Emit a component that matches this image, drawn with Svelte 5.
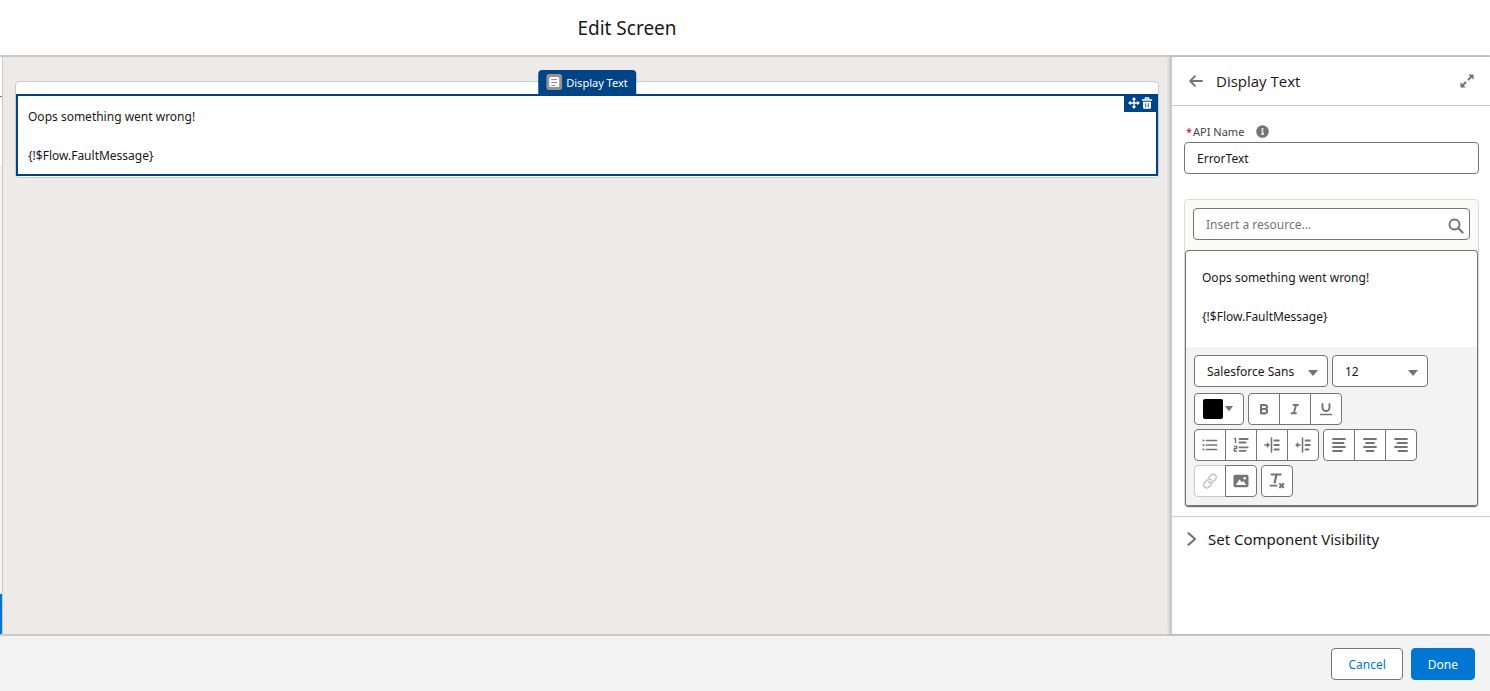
<script lang="ts">
  let apiName = $state('ErrorText');
  let resource = $state('');
  const lines = ['Oops something went wrong!', '{!$Flow.FaultMessage}'];
</script>

<div class="modal">
  <header class="modal-header"><h1>Edit Screen</h1></header>

  <main class="workspace">
    <div class="toolbox" aria-hidden="true">
      <span class="toolbox-tabs"></span>
      <span class="toolbox-list"></span>
      <span class="toolbox-active"></span>
    </div>

    <section class="canvas">
      <div class="card">
        <div class="selected">
          <div class="tag">
            <svg width="16" height="16" viewBox="0 0 16 16"><rect width="16" height="16" rx="3" fill="#969492" /><rect x="3" y="3" width="10" height="10" rx="1.5" fill="#fff" /><path d="M5 5.500h6M5 8.500h6M5 11.500h4" stroke="#969492" stroke-width="1" /></svg>
            <span>Display Text</span>
          </div>
          <div class="tools">
            <button aria-label="Move">
              <svg width="12" height="12" viewBox="0 0 12 12"><path d="M6 2v8M2 6h8" stroke="#fff" stroke-width="1.4" /><path d="M6 0l2.300 2.800H3.700zM6 12l2.300-2.800H3.700zM0 6l2.800-2.300v4.600zM12 6L9.200 3.700v4.600z" fill="#fff" /></svg>
            </button>
            <button aria-label="Delete">
              <svg width="12" height="12" viewBox="0 0 12 12"><path d="M1.500 3h9" stroke="#fff" stroke-width="1.600" stroke-linecap="round" /><path d="M4.300 2.600V1h3.400v1.600" fill="none" stroke="#fff" stroke-width="1.300" stroke-linejoin="round" /><path d="M2 4.800h8v5.800q0 1.200-1.200 1.200H3.200Q2 11.800 2 10.600z" fill="#fff" /><path d="M4.700 6.300v4M7.300 6.300v4" stroke="#014486" stroke-width=".9" /></svg>
            </button>
          </div>
          {#each lines as line}<p>{line}</p>{/each}
        </div>
      </div>
    </section>

    <aside class="panel">
      <div class="panel-header">
        <button class="plain" aria-label="Back">
          <svg width="14" height="12" viewBox="0 0 14 12"><path d="M1.200 6H13M6 1.200L1.200 6 6 10.800" fill="none" stroke="#747474" stroke-width="1.900" stroke-linecap="round" stroke-linejoin="round" /></svg>
        </button>
        <h2>Display Text</h2>
        <button class="plain" aria-label="Expand">
          <svg width="14" height="14" viewBox="0 0 14 14"><path d="M8.500 5.500l3-3M5.500 8.500l-3 3" stroke="#747474" stroke-width="2" stroke-linecap="round" /><path d="M8.300.4h4.700q.6 0 .6.600v4.700zM5.700 13.600H1q-.6 0-.6-.6V8.300z" fill="#747474" /></svg>
        </button>
      </div>

      <div class="panel-body">
        <div class="label-row">
          <label for="api-name"><abbr>*</abbr>API Name</label>
          <button class="plain" aria-label="Help">
            <svg width="13" height="13" viewBox="0 0 13 13"><circle cx="6.500" cy="6.500" r="6.300" fill="#747474" /><circle cx="6.500" cy="3.900" r="1" fill="#fff" /><path d="M5.300 6h1.400v3M5 9.200h3" fill="none" stroke="#fff" stroke-width="1.200" /></svg>
          </button>
        </div>
        <input id="api-name" class="field" type="text" bind:value={apiName} />

        <div class="rich">
          <div class="resource">
            <input class="field" type="text" aria-label="Insert a resource" placeholder="Insert a resource..." bind:value={resource} />
            <svg class="search" width="16" height="16" viewBox="0 0 16 16"><circle cx="6.500" cy="6.500" r="5" fill="none" stroke="#747474" stroke-width="1.900" /><path d="M10.300 10.300l4.300 4.300" stroke="#747474" stroke-width="2.100" stroke-linecap="round" /></svg>
          </div>
          <div class="editor">
            <div class="content" contenteditable="true" role="textbox" tabindex="0" aria-label="Text">
              {#each lines as line}<p>{line}</p>{/each}
            </div>
            <div class="toolbar">
              <div class="row selects">
                <div class="select font"><select aria-label="Font"><option>Salesforce Sans</option></select></div>
                <div class="select size"><select aria-label="Size"><option>12</option></select></div>
              </div>
              <div class="row">
                <button class="color" aria-label="Text colour"><span class="swatch"></span><svg width="8" height="6" viewBox="0 0 8 6"><path d="M.6 0h6.800q.7 0 .3.600L4.500 4.700q-.5.600-1 0L.3.600Q-.1 0 .6 0z" fill="#747474" /></svg></button>
                <div class="group">
                  <button aria-label="Bold"><svg viewBox="0 0 16 16"><path d="M5 4h3.900a1.950 1.950 0 0 1 0 4H5zM5 8h4.400a2.200 2.200 0 0 1 0 4.300H5z" fill="none" stroke="#747474" stroke-width="2.200" stroke-linejoin="round" /></svg></button>
                  <button aria-label="Italic"><svg viewBox="0 0 16 16"><path d="M6.500 4h4.500M4.500 12.200h4.500M9 4L6.800 12.200" fill="none" stroke="#747474" stroke-width="1.900" stroke-linecap="round" /></svg></button>
                  <button aria-label="Underline"><svg viewBox="0 0 16 16"><path d="M4.500 3v3.500a3.500 3.500 0 0 0 7 0V3" fill="none" stroke="#747474" stroke-width="1.900" stroke-linecap="round" /><path d="M2.700 13.500h10.600" stroke="#747474" stroke-width="1.700" stroke-linecap="round" /></svg></button>
                </div>
              </div>
              <div class="row">
                <div class="group">
                  <button aria-label="Bulleted list"><svg viewBox="0 0 16 16"><path d="M4.500 3.500h10M4.500 8h10M4.500 12.500h10" stroke="#747474" stroke-width="1.700" stroke-linecap="round" /><path d="M1.500 3.500h.1M1.500 8h.1M1.500 12.500h.1" stroke="#747474" stroke-width="2" stroke-linecap="round" /></svg></button>
                  <button aria-label="Numbered list"><svg viewBox="0 0 16 16"><path d="M6.500 2h8.200M6.500 5.500h6.200M6.500 10.300h8.200M6.500 13.800h6.200" stroke="#747474" stroke-width="1.800" stroke-linecap="round" /><path d="M1.200 2l1.300-.8V6M1 9.500h2.800v2.100H1.200V14H4" fill="none" stroke="#747474" stroke-width="1.400" stroke-linejoin="round" /></svg></button>
                  <button aria-label="Indent"><svg viewBox="0 0 16 16"><path d="M7.500 1v14" stroke="#747474" stroke-width="1.600" stroke-linecap="round" /><path d="M10.500 3.500h4.300M10.500 8h4.300M10.500 12.500h4.300" stroke="#747474" stroke-width="1.800" stroke-linecap="round" /><path d="M.9 8h3" stroke="#747474" stroke-width="1.600" stroke-linecap="round" /><path d="M2.900 4.900L6 8l-3.100 3.100z" fill="#747474" /></svg></button>
                  <button aria-label="Outdent"><svg viewBox="0 0 16 16"><path d="M7.500 1v14" stroke="#747474" stroke-width="1.600" stroke-linecap="round" /><path d="M10.500 3.500h4.300M10.500 8h4.300M10.500 12.500h3" stroke="#747474" stroke-width="1.800" stroke-linecap="round" /><path d="M3 8h2" stroke="#747474" stroke-width="1.600" stroke-linecap="round" /><path d="M3.300 4.900L.2 8l3.100 3.100z" fill="#747474" /></svg></button>
                </div>
                <div class="group">
                  <button aria-label="Align left"><svg viewBox="0 0 16 16"><path d="M2 2h12M2 6h10.500M2 10h12M2 14h9" stroke="#747474" stroke-width="1.800" stroke-linecap="round" /></svg></button>
                  <button aria-label="Align centre"><svg viewBox="0 0 16 16"><path d="M2 2h12M4 6h8M2 10h12M4.500 14h7" stroke="#747474" stroke-width="1.800" stroke-linecap="round" /></svg></button>
                  <button aria-label="Align right"><svg viewBox="0 0 16 16"><path d="M2 2h12M4.500 6H14M2 10h12M5.500 14H14" stroke="#747474" stroke-width="1.800" stroke-linecap="round" /></svg></button>
                </div>
              </div>
              <div class="row">
                <div class="group">
                  <button aria-label="Link" disabled><svg viewBox="0 0 16 16"><path d="M6.700 4.400l2.200-2.200a3 3 0 0 1 4.800.2 3 3 0 0 1-.3 3.900l-2.600 2.500a3 3 0 0 1-4.200 0M9.300 11.600l-2.200 2.200a3 3 0 0 1-4.800-.2 3 3 0 0 1 .3-3.900l2.600-2.500a3 3 0 0 1 4.200 0" fill="none" stroke="#c9c9c9" stroke-width="1.700" stroke-linecap="round" /></svg></button>
                  <button aria-label="Image"><svg viewBox="0 0 16 16"><rect x=".5" y="1.800" width="15" height="12.400" rx="1.600" fill="#747474" /><path d="M2.700 12l3.500-5.300q.4-.5.800 0l1.700 2.800 1.100-1.300q.4-.4.800 0l2.700 3.800z" fill="#fff" /><circle cx="11.700" cy="5.300" r="1.300" fill="#fff" /></svg></button>
                </div>
                <div class="group">
                  <button aria-label="Remove formatting"><svg viewBox="0 0 16 16"><path d="M2.700 1.500h9M7.500 1.500L5.700 9.500" fill="none" stroke="#747474" stroke-width="2.200" stroke-linecap="round" /><path d="M1.500 12.700h6" stroke="#747474" stroke-width="1.800" stroke-linecap="round" /><path d="M11 11l3.200 3.200M14.200 11L11 14.200" stroke="#747474" stroke-width="2.200" stroke-linecap="round" /></svg></button>
                </div>
              </div>
            </div>
          </div>
        </div>
      </div>

      <button class="section">
        <svg width="10" height="14" viewBox="0 0 10 14"><path d="M1.500 1.200L8 7l-6.500 5.800" fill="none" stroke="#747474" stroke-width="2.200" stroke-linecap="round" stroke-linejoin="round" /></svg>
        <span>Set Component Visibility</span>
      </button>
    </aside>
  </main>

  <footer class="modal-footer">
    <button class="cancel">Cancel</button>
    <button class="done">Done</button>
  </footer>
</div>

<style>
  :global(body) { margin: 0; }
  .modal { display: flex; flex-direction: column; min-height: 100vh; font: 12px/19px "Segoe UI", "Noto Sans", "Open Sans", sans-serif; color: #181818; background: #fff; }
  .modal *, .modal { box-sizing: border-box; }
  h1, h2, p { margin: 0; font-weight: 400; }
  button { font: inherit; color: inherit; margin: 0; padding: 0; border: 0; background: none; cursor: pointer; }
  svg { display: block; flex: none; }

  .modal-header { padding: 14px 236px 13px 0; border-bottom: 2px solid #c9c9c9; text-align: center; }
  h1 { font-size: 19px; line-height: 28px; }

  .workspace { flex: 1; display: flex; min-width: 0; }
  .toolbox { width: 3px; display: flex; flex-direction: column; border-right: 1px solid #c9c9c9; }
  .toolbox-tabs { height: 40px; border-bottom: 1px solid #747474; }
  .toolbox-list { flex: 1; background: linear-gradient(#fff 68px, #f3f3f3 68px); }
  .toolbox-active { height: 40px; background: #0176d3; }

  .canvas { flex: 1; min-width: 0; padding: 24px 11px 24px 12px; background: #ecebea; }
  .card { padding-top: 12px; padding-bottom: 1px; background: #fff; border: 1px solid #c9c9c9; border-radius: 4px; }
  .selected { position: relative; display: grid; gap: 20px; padding: 11px 10px 9px; border: 2px solid #014486; background: #fff; }
  .tag { position: absolute; left: 50%; bottom: 100%; transform: translateX(-50%); display: flex; align-items: center; gap: 4px; height: 26px; padding: 0 8px 2px; border-radius: 4px 4px 0 0; background: #014486; color: #fff; font-size: 11px; white-space: nowrap; }
  .tools { position: absolute; top: 0; right: 0; display: flex; gap: 1px; padding: 1px 3px 3px 4px; background: #014486; }

  .panel { width: 320px; flex: none; background: #fff; border-left: 2px solid #c9c9c9; box-shadow: -1px 0 3px rgba(0, 0, 0, .16); z-index: 1; }
  .panel-header { display: flex; align-items: center; height: 49px; padding: 0 16px 0 17px; border-bottom: 1px solid #c9c9c9; }
  h2 { flex: 1; margin-left: 13px; font-family: "Segoe UI", "Open Sans", sans-serif; font-size: 15px; line-height: 24px; }
  .panel-body { padding: 15px 11px 9px 12px; }
  .label-row { display: flex; align-items: center; gap: 12px; height: 21px; padding-left: 2px; color: #444; font-size: 11px; }
  abbr { color: #ba0517; margin-right: 1px; }
  .field { display: block; width: 100%; height: 32px; padding: 0 12px; border: 1px solid #747474; border-radius: 4px; background: #fff; color: #181818; font: inherit; outline: 0; }
  .field::placeholder { color: #747474; opacity: 1; }

  .rich { margin-top: 25px; border: 1px solid #dddbda; border-radius: 4px; background: #fafaf9; }
  .resource { position: relative; padding: 8px 8px 10px; }
  .search { position: absolute; right: 14px; top: 18px; }
  .editor { border: 1px solid #747474; border-bottom-width: 2px; border-radius: 4px; overflow: hidden; background: #fff; }
  .content { display: grid; gap: 20px; padding: 17px 16px 21px; outline: 0; }
  .toolbar { display: grid; gap: 4px; padding: 8px; background: #f3f3f3; }
  .row { display: flex; gap: 4px; }
  .selects { margin-bottom: 2px; }
  .select { position: relative; }
  .select::after { content: ""; position: absolute; right: 10px; top: 15px; border: solid transparent; border-width: 6px 5px 0; border-top-color: #747474; pointer-events: none; }
  .font { width: 134px; }
  .size { width: 96px; }
  select { appearance: none; width: 100%; height: 32px; padding: 0 12px; border: 1px solid #747474; border-radius: 4px; background: #fff; color: #181818; font: inherit; }
  .color { display: flex; align-items: center; gap: 2px; width: 50px; height: 32px; padding-left: 8px; border: 1px solid #747474; border-radius: 4px; background: #fff; }
  .swatch { width: 20px; height: 20px; border-radius: 2px; background: #000; }
  .group { display: flex; }
  .group button { display: flex; align-items: center; justify-content: center; width: 32px; height: 32px; border: 1px solid #747474; background: #fff; }
  .group button + button { margin-left: -1px; }
  .group button:first-child { border-top-left-radius: 4px; border-bottom-left-radius: 4px; }
  .group button:last-child { border-top-right-radius: 4px; border-bottom-right-radius: 4px; }
  .group button:disabled { border-color: #c9c9c9; }
  .group svg { width: 16px; height: 16px; }

  .panel-body { padding-bottom: 8px; }
  .section { display: flex; align-items: center; gap: 11px; width: 100%; padding: 10px 15px; border-top: 1px solid #c9c9c9; font-size: 15px; line-height: 24px; }

  .modal-footer { display: flex; justify-content: flex-end; gap: 8px; padding: 12px 15px 11px; border-top: 2px solid #c9c9c9; background: #f3f3f3; }
  .modal-footer button { height: 32px; padding: 0 16px; border: 1px solid #747474; border-radius: 4px; background: #fff; color: #0176d3; }
  .modal-footer .done { border-color: #0176d3; background: #0176d3; color: #fff; }
</style>
